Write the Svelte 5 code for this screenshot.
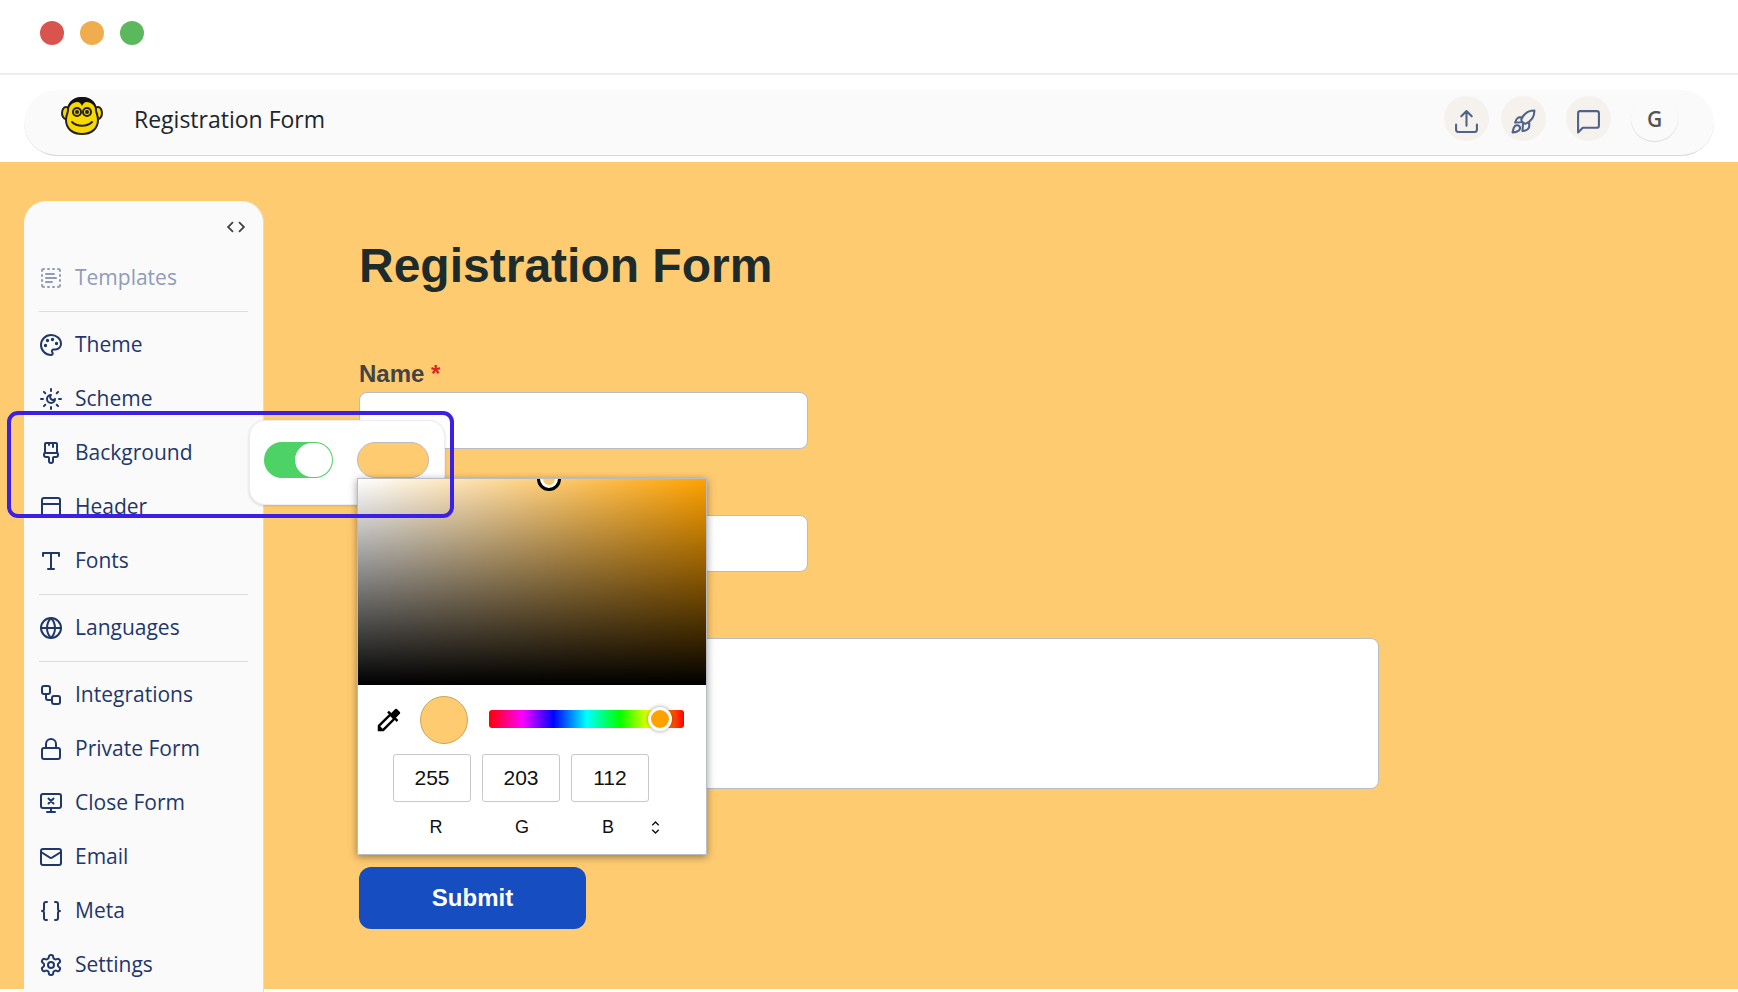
<script>
    let formName = 'Registration Form';
    let backgroundOn = $state(true);
    let hue = $state(93);
    let channels = $state([
        { name: 'R', value: 255 },
        { name: 'G', value: 203 },
        { name: 'B', value: 112 }
    ]);

    let color = $derived(`rgb(${channels.map(c => c.value).join(', ')})`);

    // Icon strokes, all on a 24x24 grid
    const icons = {
        templates: '<path d="M5 3a2 2 0 0 0-2 2M19 3a2 2 0 0 1 2 2M21 19a2 2 0 0 1-2 2M5 21a2 2 0 0 1-2-2M9 3h1M9 21h1M14 3h1M14 21h1M3 9v1M21 9v1M3 14v1M21 14v1M7 8h8M7 12h10M7 16h6"/>',
        theme: '<path d="M12 2a10 10 0 0 0 0 20c1 0 1.700-.7 1.700-1.700 0-.4-.2-.8-.4-1.100-.3-.3-.4-.7-.4-1.100a1.600 1.600 0 0 1 1.600-1.700h2c3 0 5.500-2.500 5.500-5.500C22 6 17.500 2 12 2z"/><circle cx="13.500" cy="6.500" r=".7" fill="currentColor"/><circle cx="17.500" cy="10.500" r=".7" fill="currentColor"/><circle cx="8.500" cy="7.500" r=".7" fill="currentColor"/><circle cx="6.500" cy="12.500" r=".7" fill="currentColor"/>',
        scheme: '<path d="M12 8a2.800 2.800 0 0 0 4 4 4 4 0 1 1-4-4M12 2v2M12 20v2M4.900 4.900l1.400 1.400M17.700 17.700l1.400 1.400M2 12h2M20 12h2M6.300 17.700l-1.400 1.400M19.100 4.900l-1.400 1.400"/>',
        background: '<path d="M10 2v2M14 2v4M17 2a1 1 0 0 1 1 1v9H6V3a1 1 0 0 1 1-1zM6 12a1 1 0 0 0-1 1v1a2 2 0 0 0 2 2h2a1 1 0 0 1 1 1v2.900a2 2 0 1 0 4 0V17a1 1 0 0 1 1-1h2a2 2 0 0 0 2-2v-1a1 1 0 0 0-1-1"/>',
        header: '<rect x="3" y="3" width="18" height="18" rx="2"/><path d="M3 9h18"/>',
        fonts: '<path d="M4 7V4h16v3M9 20h6M12 4v16"/>',
        languages: '<circle cx="12" cy="12" r="10"/><path d="M12 2a14.500 14.500 0 0 0 0 20 14.500 14.500 0 0 0 0-20M2 12h20"/>',
        integrations: '<rect x="3" y="3" width="8" height="8" rx="2"/><path d="M7 11v4a2 2 0 0 0 2 2h4"/><rect x="13" y="13" width="8" height="8" rx="2"/>',
        lock: '<rect x="3" y="11" width="18" height="11" rx="2"/><path d="M7 11V7a5 5 0 0 1 10 0v4"/>',
        close: '<path d="M14.500 12.500l-5-5M9.500 12.500l5-5"/><rect x="2" y="3" width="20" height="14" rx="2"/><path d="M12 17v4M8 21h8"/>',
        email: '<rect x="2" y="4" width="20" height="16" rx="2"/><path d="M22 7l-9 5.700a2 2 0 0 1-2 0L2 7"/>',
        meta: '<path d="M8 3H7a2 2 0 0 0-2 2v5a2 2 0 0 1-2 2 2 2 0 0 1 2 2v5a2 2 0 0 0 2 2h1M16 21h1a2 2 0 0 0 2-2v-5a2 2 0 0 1 2-2 2 2 0 0 1-2-2V5a2 2 0 0 0-2-2h-1"/>',
        settings: '<path d="M12.220 2h-.44a2 2 0 0 0-2 2v.18a2 2 0 0 1-1 1.730l-.43.25a2 2 0 0 1-2 0l-.15-.08a2 2 0 0 0-2.730.73l-.22.38a2 2 0 0 0 .73 2.730l.15.1a2 2 0 0 1 1 1.720v.51a2 2 0 0 1-1 1.740l-.15.09a2 2 0 0 0-.73 2.730l.22.38a2 2 0 0 0 2.730.73l.15-.08a2 2 0 0 1 2 0l.43.25a2 2 0 0 1 1 1.730V20a2 2 0 0 0 2 2h.44a2 2 0 0 0 2-2v-.18a2 2 0 0 1 1-1.730l.43-.25a2 2 0 0 1 2 0l.15.08a2 2 0 0 0 2.730-.73l.22-.39a2 2 0 0 0-.73-2.730l-.15-.08a2 2 0 0 1-1-1.740v-.5a2 2 0 0 1 1-1.740l.15-.09a2 2 0 0 0 .73-2.730l-.22-.38a2 2 0 0 0-2.730-.73l-.15.08a2 2 0 0 1-2 0l-.43-.25a2 2 0 0 1-1-1.730V4a2 2 0 0 0-2-2z"/><circle cx="12" cy="12" r="3"/>',
        upload: '<path d="M2 15v5a2 2 0 0 0 2 2h16a2 2 0 0 0 2-2v-5M17 7l-5-5-5 5M12 2v14"/>',
        rocket: '<path d="M22.500 1.500C16 1.500 12 5 10 10c-.5 1.500 2.500 4.600 4 4.100 5-2.100 8.500-6.100 8.500-12.600zM11 8H8C6 8.200 5 10 4 13l5.500-.3M11.500 14.500l-.5 6.500 2-.1c3-.9 4.500-2.400 4.500-4.400V12.500M8 16.500c-1.200-1.200-3.200-1.100-4.400.1C2.200 18 2 20.500 1.500 22.500c2-.2 4.700-.6 6-1.900 1.300-1.200 1.600-3 .5-4.100z"/>',
        comment: '<path d="M22 16a2 2 0 0 1-2 2H6.500L2 22.500V4a2 2 0 0 1 2-2h16a2 2 0 0 1 2 2z"/>'
    };

    const groups = [
        [{ label: 'Templates', icon: 'templates', muted: true }],
        [
            { label: 'Theme', icon: 'theme' },
            { label: 'Scheme', icon: 'scheme' },
            { label: 'Background', icon: 'background' },
            { label: 'Header', icon: 'header' },
            { label: 'Fonts', icon: 'fonts' }
        ],
        [{ label: 'Languages', icon: 'languages' }],
        [
            { label: 'Integrations', icon: 'integrations' },
            { label: 'Private Form', icon: 'lock' },
            { label: 'Close Form', icon: 'close' },
            { label: 'Email', icon: 'email' },
            { label: 'Meta', icon: 'meta' },
            { label: 'Settings', icon: 'settings' }
        ]
    ];
</script>

{#snippet icon(name)}
    <svg class="icon" viewBox="0 0 24 24" aria-hidden="true">{@html icons[name]}</svg>
{/snippet}

<div class="app" style:--form-bg={color}>
    <div class="window-bar">
        <span class="dot red"></span>
        <span class="dot yellow"></span>
        <span class="dot green"></span>
    </div>

    <header>
        <div class="topbar">
            <svg class="logo" viewBox="0 0 42 40" aria-hidden="true">
                <g fill="#f8d800" stroke="#222" stroke-width="2">
                    <ellipse cx="5" cy="17" rx="4" ry="6" />
                    <ellipse cx="37" cy="17" rx="4" ry="6" />
                    <path d="M21 2C12 2 7 8 7 14c0 3-2 5-2 10 0 9 7 14 16 14s16-5 16-14c0-5-2-7-2-10C35 8 30 2 21 2z" />
                </g>
                <path d="M21 1C13 1 8 5 7 12c3-4 6-6 9-6 3 0 4 2 5 4 1-2 2-4 5-4 3 0 6 2 9 6C34 5 29 1 21 1z" fill="#111" />
                <g fill="#f8d800" stroke="#222" stroke-width="2">
                    <circle cx="16" cy="16" r="4" />
                    <circle cx="26" cy="16" r="4" />
                </g>
                <circle cx="16" cy="16" r="2" fill="#222" />
                <circle cx="26" cy="16" r="2" fill="#222" />
                <path d="M11 26c5 5 15 5 20 0" fill="none" stroke="#222" stroke-width="2" stroke-linecap="round" />
            </svg>
            <span class="form-name">{formName}</span>
            <div class="actions">
                <button class="round" aria-label="Share">{@render icon('upload')}</button>
                <button class="round publish" aria-label="Publish">{@render icon('rocket')}</button>
                <button class="round" aria-label="Comments">{@render icon('comment')}</button>
                <button class="round avatar">G</button>
            </div>
        </div>
    </header>

    <main>
        <nav class="sidebar" aria-label="Form design">
            <div class="sidebar-top">
                <button class="collapse" aria-label="Collapse">
                    <svg viewBox="0 0 24 24" aria-hidden="true">
                        <path d="M9.400 16.600 4.800 12l4.600-4.600L8 6l-6 6 6 6zM14.600 16.600l4.600-4.600-4.600-4.600L16 6l6 6-6 6z" />
                    </svg>
                </button>
            </div>
            {#each groups as group}
                <ul>
                    {#each group as item}
                        <li>
                            <button class="item" class:muted={item.muted}>
                                {@render icon(item.icon)}
                                <span>{item.label}</span>
                            </button>
                            {#if item.label === 'Background'}
                                <div class="popover">
                                    <input class="toggle" type="checkbox" aria-label="Background color" bind:checked={backgroundOn} />
                                    <div class="swatch-wrap">
                                        <button class="swatch" aria-label="Pick color"></button>
                                        <div class="picker">
                                            <div class="shade"><span class="shade-thumb"></span></div>
                                            <div class="controls">
                                                <button class="dropper" aria-label="Eyedropper">
                                                    <svg viewBox="0 0 24 24" aria-hidden="true">
                                                        <path d="M20.710 5.630l-2.340-2.340a1 1 0 0 0-1.410 0l-3.120 3.120-1.930-1.910-1.410 1.410 1.420 1.420L3 16.250V21h4.750l8.920-8.920 1.420 1.420 1.410-1.410-1.920-1.920 3.120-3.120c.4-.4.4-1.030.01-1.420zM6.920 19L5 17.080l8.060-8.060 1.920 1.920L6.920 19z" />
                                                    </svg>
                                                </button>
                                                <span class="preview"></span>
                                                <input class="hue" type="range" min="0" max="100" aria-label="Hue" bind:value={hue} />
                                            </div>
                                            <div class="values">
                                                {#each channels as channel}
                                                    <input id="channel-{channel.name}" type="text" bind:value={channel.value} />
                                                {/each}
                                            </div>
                                            <div class="channel-names">
                                                {#each channels as channel}
                                                    <label for="channel-{channel.name}">{channel.name}</label>
                                                {/each}
                                                <button class="format" aria-label="Change format">
                                                    <svg viewBox="0 0 8 12" aria-hidden="true"><path d="M1 4l3-3 3 3M1 8l3 3 3-3" /></svg>
                                                </button>
                                            </div>
                                        </div>
                                    </div>
                                </div>
                                <div class="highlight"></div>
                            {/if}
                        </li>
                    {/each}
                </ul>
            {/each}
        </nav>

        <form class="form">
            <h1>{formName}</h1>
            <div class="field">
                <label for="name">Name <span class="required">*</span></label>
                <input id="name" type="text" />
            </div>
            <div class="field unlabeled">
                <input type="text" aria-label="Email" />
            </div>
            <div class="field unlabeled">
                <textarea aria-label="Message"></textarea>
            </div>
            <button class="submit" type="button">Submit</button>
        </form>
    </main>
</div>

<style>
    :global(body) {
        margin: 0;
        background: #fff;
    }

    .app {
        display: flex;
        flex-direction: column;
        min-height: 100vh;
        font-family: "Segoe UI", "Open Sans", "Noto Sans", sans-serif;
        font-size: 21px;
    }

    .app * {
        box-sizing: border-box;
    }

    button {
        padding: 0;
        border: 0;
        background: none;
        font: inherit;
        color: inherit;
        cursor: pointer;
    }

    .icon {
        flex: none;
        width: 24px;
        height: 24px;
        fill: none;
        stroke: currentColor;
        stroke-width: 2;
        stroke-linecap: round;
        stroke-linejoin: round;
    }

    .window-bar {
        display: flex;
        gap: 16px;
        padding: 21px 40px 28px;
        border-bottom: 2px solid #eeeeea;
    }

    .dot {
        width: 24px;
        height: 24px;
        border-radius: 50%;
    }

    .red { background: #d9534f; }
    .yellow { background: #f0ad4e; }
    .green { background: #5cb85c; }

    header {
        padding: 15px 24px 6px;
    }

    .topbar {
        display: flex;
        align-items: flex-start;
        height: 66px;
        padding: 6px 36px 0 37px;
        border-bottom: 1px solid #d8d8d8;
        border-radius: 33px;
        background: #fafafa;
    }

    .logo {
        width: 42px;
        height: 40px;
    }

    .form-name {
        margin-left: 31px;
        font-size: 23px;
        line-height: 46px;
        color: #212529;
    }

    .actions {
        display: flex;
        gap: 20px;
        margin-left: auto;
    }

    .round {
        display: flex;
        justify-content: center;
        align-items: center;
        width: 45px;
        height: 45px;
        padding-top: 6px;
        border-radius: 50%;
        background: #f5f1ed;
        color: #50628a;
    }

    .round .icon {
        width: 25px;
        height: 25px;
    }

    .publish {
        margin-left: -8px;
    }

    .avatar {
        width: 47px;
        padding: 0;
        background: #fafafa;
        box-shadow: 0 1px 1px #ddd;
        font-weight: 600;
        color: #555;
    }

    main {
        display: flex;
        flex: 1;
        align-items: flex-start;
        margin-bottom: 3px;
        padding: 39px 24px 0;
        background: var(--form-bg);
    }

    .sidebar {
        flex: none;
        position: relative;
        width: 240px;
        margin-bottom: -3px;
        border-right: 1px solid #ddd;
        border-radius: 22px 22px 0 0;
        background: #fafafa;
    }

    .sidebar-top {
        display: flex;
        justify-content: flex-end;
        height: 50px;
        padding: 15px 16px 0;
    }

    .collapse {
        width: 22px;
        height: 22px;
    }

    .collapse svg {
        display: block;
        fill: #444;
    }

    ul {
        margin: 0 15px;
        padding: 0;
        list-style: none;
    }

    ul + ul {
        margin-top: 6px;
        padding-top: 6px;
        border-top: 1px solid #ddd;
    }

    li {
        position: relative;
    }

    .item {
        display: flex;
        align-items: center;
        gap: 12px;
        width: 100%;
        height: 54px;
        color: #1f3769;
        white-space: nowrap;
    }

    .item span {
        padding-bottom: 2px;
    }

    .muted {
        color: #8f9bb8;
    }

    .popover {
        display: flex;
        justify-content: space-between;
        position: absolute;
        top: -6px;
        left: 210px;
        z-index: 2;
        width: 196px;
        height: 85px;
        padding: 21px 15px 0 14px;
        border: 1px solid #eee;
        border-radius: 16px;
        background: #fff;
        box-shadow: 0 1px 3px rgba(0, 0, 0, 0.15);
    }

    .toggle {
        appearance: none;
        width: 69px;
        height: 36px;
        margin: 0;
        padding: 1px;
        border-radius: 18px;
        background: #ccc;
    }

    .toggle::before {
        content: '';
        display: block;
        width: 34px;
        height: 34px;
        border-radius: 50%;
        background: #fff;
    }

    .toggle:checked {
        background: #4cd265;
    }

    .toggle:checked::before {
        width: 37px;
        margin-left: auto;
        border-radius: 18px;
    }

    .swatch-wrap {
        position: relative;
    }

    .swatch {
        display: block;
        width: 72px;
        height: 36px;
        border: 1px solid #bbb;
        border-radius: 18px;
        background: var(--form-bg);
    }

    .picker {
        position: absolute;
        top: 36px;
        left: 0;
        width: 350px;
        height: 377px;
        border: 1px solid #b8bcc4;
        background: #fff;
        box-shadow: 0 2px 8px rgba(0, 0, 0, 0.4);
        font-family: "Liberation Sans", Arial, sans-serif;
        color: #111;
    }

    .shade {
        position: relative;
        height: 206px;
        overflow: hidden;
        background: linear-gradient(to top, #000, transparent), linear-gradient(to right, #fff, #ffa200);
    }

    .shade-thumb {
        position: absolute;
        top: -12px;
        left: 179px;
        width: 24px;
        height: 24px;
        border: 3px solid #000;
        border-radius: 50%;
        box-shadow: inset 0 0 0 3px #fff;
    }

    .controls {
        display: flex;
        align-items: center;
        padding: 11px 22px 0 16px;
    }

    .dropper {
        width: 30px;
        height: 30px;
    }

    .dropper svg {
        display: block;
        fill: #000;
    }

    .preview {
        width: 48px;
        height: 48px;
        margin: 0 21px 0 16px;
        border: 1px solid #cca35a;
        border-radius: 50%;
        background: var(--form-bg);
    }

    .hue {
        appearance: none;
        flex: 1;
        min-width: 0;
        height: 18px;
        margin: 0 0 2px;
        border-radius: 3px;
        background: linear-gradient(to right, #f00, #f0f 17%, #00f 33%, #0ff 50%, #0f0 67%, #ff0 83%, #f00);
    }

    .hue::-webkit-slider-runnable-track {
        height: 18px;
    }

    .hue::-webkit-slider-thumb {
        appearance: none;
        width: 24px;
        height: 24px;
        margin-top: -3px;
        border: 3px solid #fff;
        border-radius: 50%;
        background: #ffa200;
        box-shadow: 0 0 4px rgba(0, 0, 0, 0.4);
    }

    .values {
        display: flex;
        gap: 11px;
        padding: 10px 0 0 35px;
    }

    .values input {
        width: 78px;
        height: 48px;
        padding: 0;
        border: 1px solid #c8c8c8;
        border-radius: 3px;
        font: 21px "Liberation Sans", Arial, sans-serif;
        color: #111;
        text-align: center;
    }

    .channel-names {
        display: flex;
        align-items: center;
        padding: 14px 0 0 35px;
        font-size: 18px;
        line-height: 22px;
    }

    .channel-names label {
        width: 86px;
        text-align: center;
    }

    .format svg {
        display: block;
        width: 9px;
        height: 13px;
        fill: none;
        stroke: #111;
        stroke-width: 1.300;
    }

    .highlight {
        position: absolute;
        top: -15px;
        left: -32px;
        z-index: 3;
        width: 447px;
        height: 107px;
        border: 4px solid #3c20e6;
        border-radius: 11px;
        pointer-events: none;
    }

    .form {
        flex: 1;
        max-width: 1020px;
        padding: 37px 0 60px;
        margin-left: 95px;
        font-family: "Liberation Sans", Arial, sans-serif;
        font-size: 24px;
    }

    h1 {
        margin: 0 0 66px;
        font-size: 48px;
        line-height: 56px;
        color: #1d2b2b;
    }

    .field {
        display: flex;
        flex-direction: column;
        gap: 4px;
    }

    .field label {
        font-weight: bold;
        line-height: 28px;
        color: #444;
    }

    .required {
        color: #dc2626;
    }

    .unlabeled {
        padding-top: 66px;
    }

    .field input,
    .field textarea {
        display: block;
        width: 44%;
        height: 57px;
        border: 1px solid #b8bcc4;
        border-radius: 8px;
        background: #fff;
        resize: none;
    }

    .field textarea {
        width: 100%;
        height: 151px;
    }

    .submit {
        width: 227px;
        height: 62px;
        margin-top: 78px;
        border-radius: 12px;
        background: #164dc0;
        font-weight: bold;
        color: #fff;
    }
</style>
